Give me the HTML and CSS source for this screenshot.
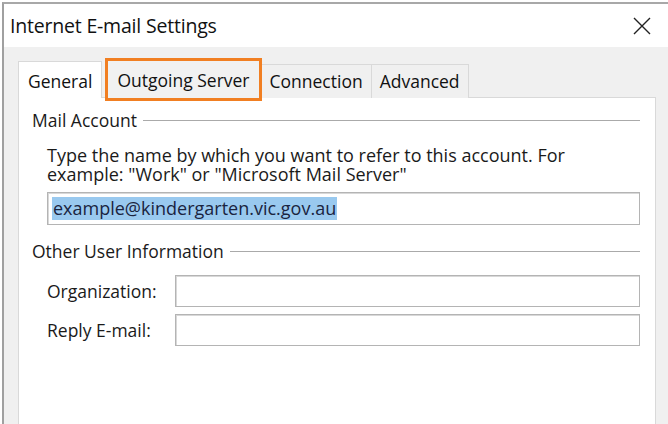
FILE: index.html
```html
<!DOCTYPE html>
<html>
<head>
<meta charset="utf-8">
<link rel="stylesheet" href="styles.css">
</head>
<body>
<div class="window">
  <div class="titlebar">
    <span class="title">Internet E-mail Settings</span>
    <svg class="close" width="20" height="18" viewBox="0 0 20 18"><path d="M2 1 L18 17 M18 1 L2 17" stroke="#222" stroke-width="1.4" fill="none"/></svg>
  </div>
  <div class="body">
    <div class="tabs">
      <div class="tab active">General</div>
      <div class="tab highlight">Outgoing Server</div>
      <div class="tab">Connection</div>
      <div class="tab">Advanced</div>
    </div>
    <div class="panel">
      <div class="group-head"><span>Mail Account</span><i class="rule"></i></div>
      <div class="group-body">
        <p class="desc">Type the name by which you want to refer to this account. For example: "Work" or "Microsoft Mail Server"</p>
        <div class="input wide"><span class="sel">example@kindergarten.vic.gov.au</span></div>
      </div>
      <div class="group-head second"><span>Other User Information</span><i class="rule"></i></div>
      <div class="group-body form">
        <label>Organization:</label><div class="input"></div>
        <label>Reply E-mail:</label><div class="input"></div>
      </div>
    </div>
  </div>
</div>
</body>
</html>
```
FILE: styles.css
```css
html, body { margin: 0; padding: 0; }
body {
  width: 668px; height: 424px; overflow: hidden;
  background: #fff;
  font-family: "Open Sans", "Noto Sans", sans-serif;
  color: #1a1a1a;
}
.window {
  margin: 2px 0 0 2px;
  border-top: 2px solid #a8a8a8;
  border-left: 2px solid #a0a0a0;
  height: 420px;
  display: flex; flex-direction: column;
}
.titlebar {
  height: 43px; background: #fff;
  display: flex; align-items: center; justify-content: space-between;
  padding: 0 16px 0 6px;
}
.title { font-size: 19.5px; color: #111; letter-spacing: -0.2px; }
.body {
  flex: 1; background: #f0f0f0;
  padding: 0 12px 0 14px;
  display: flex; flex-direction: column;
}
.tabs {
  display: flex; align-items: flex-end;
  height: 51px; margin-bottom: -1px;
  position: relative; z-index: 1;
}
.tab {
  font-size: 17.5px; height: 34px; line-height: 33px;
  padding: 0 8px; box-sizing: border-box;
  border: 1px solid #d9d9d9; border-bottom: none;
  background: #f0f0f0; color: #111;
}
.tab.active { background: #fff; height: 37px; line-height: 38px; padding: 0 9px; margin-right: 3px; }
.tab.highlight {
  border: 3px solid #f17f22; height: 43px; margin-bottom: -3px;
  line-height: 39px; padding: 0 9px; background: #f1f1f1;
}
.tab + .tab { border-left: none; }
.tab.highlight + .tab { border-left: none; }
.tab.active + .tab { border-left: 3px solid #f17f22; }
.panel {
  flex: 1; background: #fff;
  border: 1px solid #d9d9d9; border-bottom: none;
  padding: 11px 15px 0 13px;
}
.group-head { display: flex; align-items: center; font-size: 17.5px; height: 22px; }
.group-head .rule { flex: 1; height: 1px; background: #aaa; margin-left: 6px; }
.group-head.second { margin-top: 15px; }
.group-body { padding-left: 15px; }
.desc { margin: 15px 0 0; font-size: 18px; line-height: 19px; max-width: 540px; }
.input {
  box-sizing: border-box; height: 32px;
  border: 1px solid #b4b4b4; background: #fff;
  box-shadow: inset 1px 1px 0 #d8d8d8;
}
.input.wide { margin-top: 8px; height: 33px; padding: 4px 4px; display: flex; }
.sel { background: #99c9ef; font-size: 18px; line-height: 23px; padding: 0 1px; color: #1a2440; }
.form {
  display: grid; grid-template-columns: 128px 1fr; row-gap: 7px;
  margin-top: 13px; align-items: center;
}
.form label { font-size: 17.5px; }
```
